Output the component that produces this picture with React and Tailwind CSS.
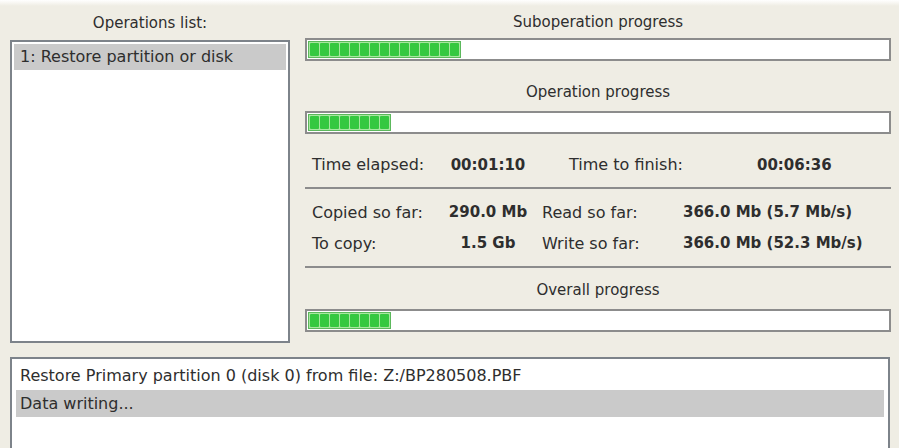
import React from "react";

const font = { fontFamily: '"DejaVu Sans", Verdana, sans-serif' };

function Bar({ segments }) {
  return (
    <div className="h-[23px] border-2 border-[#8c8c8c] bg-white flex items-stretch p-[1px]">
      <div className="flex items-stretch gap-[1px] bg-[#a8e6a0] border border-[#5cb85c] p-[1px]">
        {Array.from({ length: segments }).map((_, i) => (
          <span key={i} className="w-[9px] bg-[#35c840] rounded-[1px]" />
        ))}
      </div>
    </div>
  );
}

function Label({ children, className = "" }) {
  return (
    <div className={`flex items-end justify-center text-[15px] ${className}`}>
      {children}
    </div>
  );
}

export default function App() {
  return (
    <div
      className="w-[899px] h-[448px] overflow-hidden bg-[#efede4] flex flex-col text-[#2e2e2e]"
      style={font}
    >
      <div className="h-[6px] bg-gradient-to-b from-white to-[#efede4]" />
      <div className="flex pl-[10px] pr-[8px] gap-[15px]">
        {/* Operations list */}
        <div className="w-[280px] flex flex-col">
          <div className="h-[34px] flex items-center justify-center text-[15px]">
            Operations list:
          </div>
          <div className="h-[303px] border-2 border-[#7d838a] bg-white p-[2px]">
            <div className="h-[26px] bg-[#cacaca] flex items-center px-[6px] text-[16px]">
              1: Restore partition or disk
            </div>
          </div>
        </div>

        {/* Progress */}
        <div className="flex-1 flex flex-col">
          <Label className="h-[32px] pb-[5px]">Suboperation progress</Label>
          <Bar segments={15} />
          <Label className="h-[50px] pb-[8px]">Operation progress</Label>
          <Bar segments={8} />

          <div className="h-[53px] grid grid-cols-[128px_96px_221px_1fr] items-center pl-[7px] pt-[9px] text-[16px]">
            <span>Time elapsed:</span>
            <span className="text-center font-bold text-[15px]">00:01:10</span>
            <span className="pl-[33px]">Time to finish:</span>
            <span className="font-bold text-[15px]">00:06:36</span>
          </div>
          <div className="h-[2px] bg-[#8c8c8c]" />

          <div className="grid grid-cols-[128px_96px_141px_1fr] grid-rows-[31px_31px] items-center pl-[7px] pt-[8px] pb-[7px] text-[16px]">
            <span>Copied so far:</span>
            <span className="text-center font-bold text-[15px]">290.0 Mb</span>
            <span className="pl-[6px]">Read so far:</span>
            <span className="pl-[6px] font-bold text-[15px]">366.0 Mb (5.7 Mb/s)</span>
            <span>To copy:</span>
            <span className="text-center font-bold text-[15px]">1.5 Gb</span>
            <span className="pl-[6px]">Write so far:</span>
            <span className="pl-[6px] font-bold text-[15px]">366.0 Mb (52.3 Mb/s)</span>
          </div>
          <div className="h-[2px] bg-[#8c8c8c]" />

          <Label className="h-[41px] pb-[8px]">Overall progress</Label>
          <Bar segments={8} />
        </div>
      </div>

      {/* Log */}
      <div className="mt-[14px] ml-[10px] w-[880px] flex-1 border-2 border-b-0 border-[#7d838a] bg-white px-[4px] pt-[2px]">
        <div className="h-[29px] flex items-center px-[4px] text-[16px]">
          Restore Primary partition 0 (disk 0) from file: Z:/BP280508.PBF
        </div>
        <div className="h-[27px] bg-[#cacaca] flex items-center px-[4px] text-[16px]">
          Data writing...
        </div>
      </div>
    </div>
  );
}
